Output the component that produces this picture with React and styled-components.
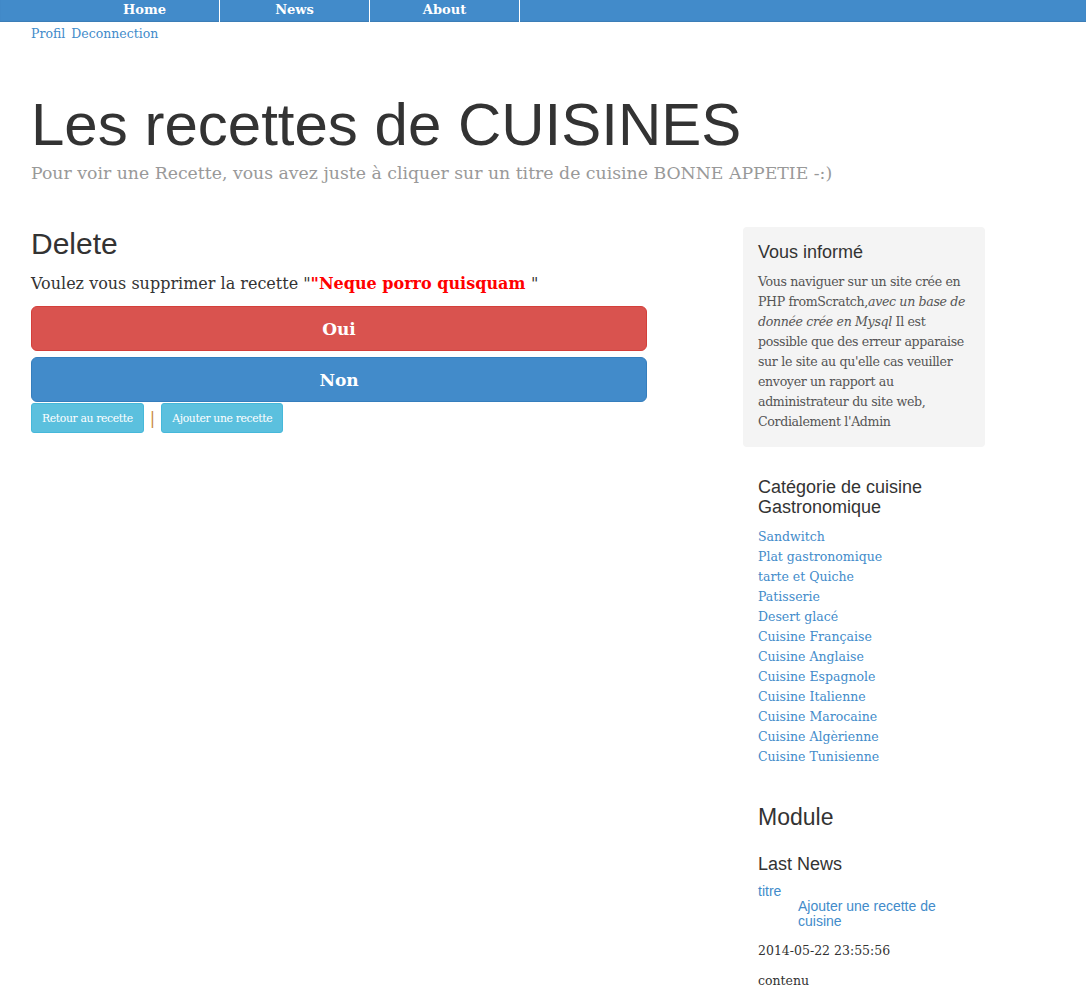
import React from 'react';
import styled, { createGlobalStyle } from 'styled-components';

const GlobalStyle = createGlobalStyle`
    html, body {
        margin: 0;
        padding: 0;
        background: #fff;
    }
    body {
        font-family: "DejaVu Serif", Georgia, serif;
        color: #555;
    }
    * {
        box-sizing: border-box;
    }
`;

const Masthead = styled.div`
    height: 22px;
    background-color: #428bca;
    box-shadow: inset 0 -1px 1px rgba(0, 0, 0, 0.1);
`;

const Nav = styled.nav`
    display: flex;
    height: 100%;
    padding-left: 70px;
`;

const NavItem = styled.a`
    width: 150px;
    height: 100%;
    display: flex;
    align-items: center;
    justify-content: center;
    padding-bottom: 4px;
    color: #fff;
    font-size: 13px;
    font-weight: bold;
    text-decoration: none;
    border-right: 1px solid #fff;
`;

const Container = styled.div`
    margin-left: 16px;
    padding: 0 15px;
`;

const UserLinks = styled.div`
    display: flex;
    gap: 6px;
    padding-top: 3px;
    font-size: 12.5px;
    line-height: 18px;
`;

const Link = styled.a`
    color: #428bca;
    text-decoration: none;
`;

const Header = styled.div`
    padding-top: 49px;
    padding-bottom: 20px;
`;

const Title = styled.h1`
    margin: 0;
    font-family: "Liberation Sans", Arial, sans-serif;
    font-weight: normal;
    font-size: 60px;
    line-height: 66px;
    color: #333;
`;

const Lead = styled.p`
    margin: 2px 0 0;
    font-size: 17.3px;
    line-height: 26px;
    color: #999;
    font-family: "DejaVu Serif", Georgia, serif;
`;

const Row = styled.div`
    display: flex;
    align-items: flex-start;
`;

const Main = styled.div`
    width: 616px;
    flex-shrink: 0;
`;

const PostTitle = styled.h2`
    margin: 21px 0 12px;
    font-family: "Liberation Sans", Arial, sans-serif;
    font-weight: normal;
    font-size: 30px;
    line-height: 33px;
    color: #333;
`;

const Question = styled.p`
    margin: 0 0 10px;
    font-size: 16px;
    line-height: 24px;
    color: #333;
`;

const Strong = styled.strong`
    color: red;
`;

const BigButton = styled.button`
    display: block;
    width: 100%;
    height: 45px;
    margin-bottom: 6px;
    border: 1px solid ${p => p.$border};
    border-radius: 6px;
    background-color: ${p => p.$bg};
    color: #fff;
    font-family: "DejaVu Serif", Georgia, serif;
    font-size: 17px;
    font-weight: 600;
    cursor: pointer;
`;

const SmallActions = styled.div`
    display: flex;
    align-items: center;
    gap: 6px;
    margin-top: -5px;
`;

const SmallButton = styled.a`
    display: inline-flex;
    align-items: center;
    height: 30px;
    padding: 0 10px;
    background-color: #5bc0de;
    border: 1px solid #46b8da;
    border-radius: 3px;
    color: #fff;
    font-size: 10.8px;
    font-weight: normal;
    letter-spacing: -0.35px;
    text-decoration: none;
`;

const Separator = styled.span`
    color: #c98a3c;
    font-size: 16px;
`;

const Sidebar = styled.aside`
    width: 242px;
    flex-shrink: 0;
    margin-left: 96px;
    margin-top: 21px;
`;

const Module = styled.div`
    padding: 15px;
    margin-bottom: ${p => p.$mb ?? 15}px;
    background-color: ${p => (p.$inset ? '#f4f4f4' : 'transparent')};
    border-radius: 4px;
`;

const ModuleTitle = styled.h4`
    margin: 0 0 10px;
    font-family: "Liberation Sans", Arial, sans-serif;
    font-weight: normal;
    font-size: 18px;
    line-height: 20px;
    color: #333;
`;

const ModuleBig = styled.h3`
    margin: 0 0 24px;
    font-family: "Liberation Sans", Arial, sans-serif;
    font-weight: normal;
    font-size: 23px;
    line-height: 26px;
    color: #333;
`;

const Text = styled.p`
    margin: 0;
    font-size: 12.6px;
    letter-spacing: -0.35px;
    line-height: 20px;
    color: #555;
`;

const List = styled.ol`
    list-style: none;
    margin: 0;
    padding: 0;
    font-size: 12.5px;
    line-height: 20px;
`;

const NewsList = styled.ul`
    margin: 0 0 14px;
    padding: 0;
    list-style: none;
    font-family: "Liberation Sans", Arial, sans-serif;
    font-size: 14px;
    line-height: 15px;
`;

const NewsSub = styled.ul`
    margin: 0;
    padding-left: 40px;
    list-style: none;
`;

const NewsMeta = styled.p`
    margin: 0 0 14px;
    font-size: 12.5px;
    line-height: 16px;
    color: #333;
`;

const categories = [
    'Sandwitch',
    'Plat gastronomique',
    'tarte et Quiche',
    'Patisserie',
    'Desert glacé',
    'Cuisine Française',
    'Cuisine Anglaise',
    'Cuisine Espagnole',
    'Cuisine Italienne',
    'Cuisine Marocaine',
    'Cuisine Algèrienne',
    'Cuisine Tunisienne',
];

function App() {
    return (
        <>
            <GlobalStyle />
            <Masthead>
                <Nav>
                    <NavItem href="#">Home</NavItem>
                    <NavItem href="#">News</NavItem>
                    <NavItem href="#">About</NavItem>
                </Nav>
            </Masthead>
            <Container>
                <UserLinks>
                    <Link href="#">Profil</Link>
                    <Link href="#">Deconnection</Link>
                </UserLinks>
                <Header>
                    <Title>Les recettes de CUISINES</Title>
                    <Lead>Pour voir une Recette, vous avez juste à cliquer sur un titre de cuisine BONNE APPETIE -:)</Lead>
                </Header>
                <Row>
                    <Main>
                        <PostTitle>Delete</PostTitle>
                        <Question>
                            Voulez vous supprimer la recette "<Strong>"Neque porro quisquam </Strong>"
                        </Question>
                        <BigButton $bg="#d9534f" $border="#d43f3a">Oui</BigButton>
                        <BigButton $bg="#428bca" $border="#357ebd">Non</BigButton>
                        <SmallActions>
                            <SmallButton href="#">Retour au recette</SmallButton>
                            <Separator>|</Separator>
                            <SmallButton href="#">Ajouter une recette</SmallButton>
                        </SmallActions>
                    </Main>
                    <Sidebar>
                        <Module $inset>
                            <ModuleTitle>Vous informé</ModuleTitle>
                            <Text>
                                Vous naviguer sur un site crée en PHP fromScratch,<em>avec un base de donnée crée en Mysql</em> Il est possible que des erreur apparaise sur le site au qu'elle cas veuiller envoyer un rapport au administrateur du site web, Cordialement l'Admin
                            </Text>
                        </Module>
                        <Module $mb={7}>
                            <ModuleTitle>Catégorie de cuisine Gastronomique</ModuleTitle>
                            <List>
                                {categories.map(c => (
                                    <li key={c}><Link href="#">{c}</Link></li>
                                ))}
                            </List>
                        </Module>
                        <Module>
                            <ModuleBig>Module</ModuleBig>
                            <ModuleTitle>Last News</ModuleTitle>
                            <NewsList>
                                <li>
                                    <Link href="#">titre</Link>
                                    <NewsSub>
                                        <li><Link href="#">Ajouter une recette de cuisine</Link></li>
                                    </NewsSub>
                                </li>
                            </NewsList>
                            <NewsMeta>2014-05-22 23:55:56</NewsMeta>
                            <NewsMeta>contenu</NewsMeta>
                        </Module>
                    </Sidebar>
                </Row>
            </Container>
        </>
    );
}

export default App;
